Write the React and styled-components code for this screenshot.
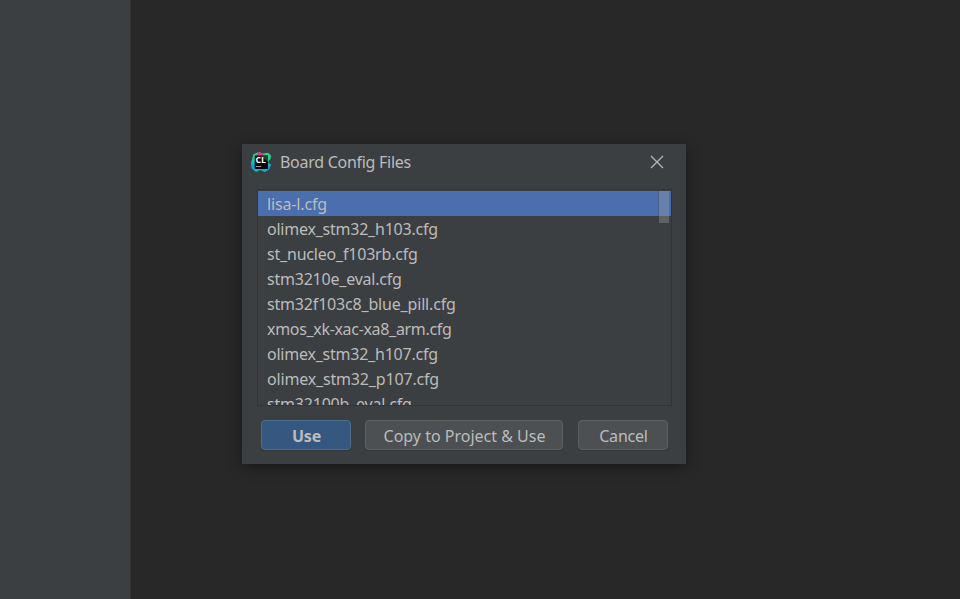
import React from 'react';
import styled, { createGlobalStyle } from 'styled-components';

const GlobalStyle = createGlobalStyle`
  body { margin: 0; background: #282828; overflow: hidden; }
  * { box-sizing: border-box; }
`;

const Screen = styled.div`
  display: flex;
  width: 960px;
  height: 599px;
  background: #282828;
  font-family: "Noto Sans", "Open Sans", sans-serif;
  font-size: 16px;
  color: #bbbbbb;
`;

const Sidebar = styled.aside`
  flex: none;
  width: 131px;
  background: #3c3f41;
  border-right: 1px solid #343434;
`;

const Workspace = styled.main`
  flex: 1;
  padding: 144px 0 0 111px;
`;

const Dialog = styled.section`
  display: flex;
  flex-direction: column;
  width: 444px;
  height: 320px;
  background: #3c3f41;
  box-shadow: 0 3px 13px rgba(0, 0, 0, 0.38);
`;

const TitleBar = styled.header`
  display: flex;
  align-items: center;
  height: 45px;
  padding: 0 22px 9px 9px;
`;

const Title = styled.h1`
  flex: 1;
  margin: 0 0 0 9px;
  font-size: 16px;
  font-weight: 400;
  line-height: 24px;
  letter-spacing: ${(p) => p.$spacing}px;
`;

const CloseButton = styled.button`
  display: flex;
  padding: 0;
  border: 0;
  background: none;
  color: #b5b6b7;
`;

const ListFrame = styled.div`
  display: flex;
  position: relative;
  width: 415px;
  height: 217px;
  margin-left: 15px;
  padding-top: 1px;
  border: 1px solid #323435;
  overflow: hidden;
`;

const FileList = styled.ul`
  flex: 1;
  margin: 0;
  padding: 0;
  list-style: none;
`;

const FileRow = styled.li`
  height: 25px;
  padding: 1px 0 0 9px;
  line-height: 25px;
  white-space: nowrap;
  letter-spacing: ${(p) => p.$spacing}px;
  background: ${(p) => (p.$selected ? '#4b6eaf' : 'transparent')};
`;

const ScrollThumb = styled.div`
  position: absolute;
  top: 1px;
  right: 2px;
  width: 11px;
  height: 32px;
  background: rgba(166, 166, 166, 0.33);
  background-clip: padding-box;
  border-left: 1px solid rgba(60, 63, 65, 0.3);
`;

const Actions = styled.footer`
  display: flex;
  padding: 14px 17px 0 19px;
`;

const Button = styled.button`
  flex: none;
  width: ${(p) => p.$width}px;
  height: 30px;
  margin-left: ${(p) => p.$gap}px;
  padding: 2px 0 0 1px;
  border: 1px solid ${(p) => (p.$primary ? '#4c708c' : '#5e6060')};
  border-radius: 4px;
  background: ${(p) => (p.$primary ? '#365880' : '#4c5052')};
  box-shadow: 0 1px 0 rgba(0, 0, 0, 0.12);
  color: #bbbbbb;
  font: ${(p) => (p.$primary ? 700 : 400)} 16px "Noto Sans", "Open Sans", sans-serif;
  letter-spacing: ${(p) => p.$spacing}px;
  white-space: nowrap;
`;

const LogoText = styled.text`
  fill: #ffffff;
  font: 700 8px "Open Sans", "Noto Sans", sans-serif;
`;

const files = [
  ['lisa-l.cfg', -0.15],
  ['olimex_stm32_h103.cfg', -0.23],
  ['st_nucleo_f103rb.cfg', -0.2],
  ['stm3210e_eval.cfg', -0.22],
  ['stm32f103c8_blue_pill.cfg', -0.18],
  ['xmos_xk-xac-xa8_arm.cfg', -0.32],
  ['olimex_stm32_h107.cfg', -0.23],
  ['olimex_stm32_p107.cfg', -0.17],
  ['stm32100b_eval.cfg', -0.2],
];

function CLionLogo() {
  return (
    <svg width="20" height="20" viewBox="0 0 20 20" aria-hidden="true">
      <defs>
        <linearGradient id="edge" x1="0" y1="0" x2="0" y2="1">
          <stop offset="0" stopColor="#21d789" />
          <stop offset="0.5" stopColor="#21d79a" />
          <stop offset="0.75" stopColor="#079bea" />
          <stop offset="1" stopColor="#12bfc4" />
        </linearGradient>
        <linearGradient id="left" x1="0" y1="0" x2="0" y2="1">
          <stop offset="0" stopColor="#22d78b" />
          <stop offset="0.45" stopColor="#1bcba4" />
          <stop offset="0.75" stopColor="#0796e6" />
          <stop offset="1" stopColor="#17c8b1" />
        </linearGradient>
      </defs>
      <path d="M2.5 2.5 7 .3 12 1.5 17 .7 20 3.5 19.5 7 17.4 9 17.4 11 20 12.5 18.5 17 14 20 9 18 5 20 .8 16.5 0 12Z" fill="url(#edge)" />
      <path d="M2.5 2.5 6 1V19L1 16.5 0 12Z" fill="url(#left)" />
      <path d="M6 1.2 8.5 0 12.5 2 12 5H7Z" fill="#ed358c" />
      <rect x="3.7" y="3.5" width="13.3" height="13.5" fill="#080808" />
      <path d="M9 3.5H17V10Z" fill="#343638" />
      <LogoText x="4.5" y="11" textLength="10.5" lengthAdjust="spacingAndGlyphs">CL</LogoText>
      <path d="M5 14.5H10" stroke="#999" strokeWidth="1" />
    </svg>
  );
}

export default function App() {
  return (
    <>
      <GlobalStyle />
      <Screen>
        <Sidebar />
        <Workspace>
          <Dialog role="dialog" aria-label="Board Config Files">
            <TitleBar>
              <CLionLogo />
              <Title $spacing={-0.28}>Board Config Files</Title>
              <CloseButton aria-label="Close">
                <svg width="14" height="14" viewBox="0 0 14 14">
                  <path d="M1 1 13 13M13 1 1 13" stroke="currentColor" strokeWidth="1.3" />
                </svg>
              </CloseButton>
            </TitleBar>
            <ListFrame>
              <FileList>
                {files.map(([name, spacing], i) => (
                  <FileRow key={name} $selected={i === 0} $spacing={spacing}>{name}</FileRow>
                ))}
              </FileList>
              <ScrollThumb />
            </ListFrame>
            <Actions>
              <Button $primary $width={90} $gap={0} $spacing={-0.2}>Use</Button>
              <Button $width={198} $gap={14} $spacing={0}>Copy to Project &amp; Use</Button>
              <Button $width={90} $gap={15} $spacing={-0.2}>Cancel</Button>
            </Actions>
          </Dialog>
        </Workspace>
      </Screen>
    </>
  );
}
